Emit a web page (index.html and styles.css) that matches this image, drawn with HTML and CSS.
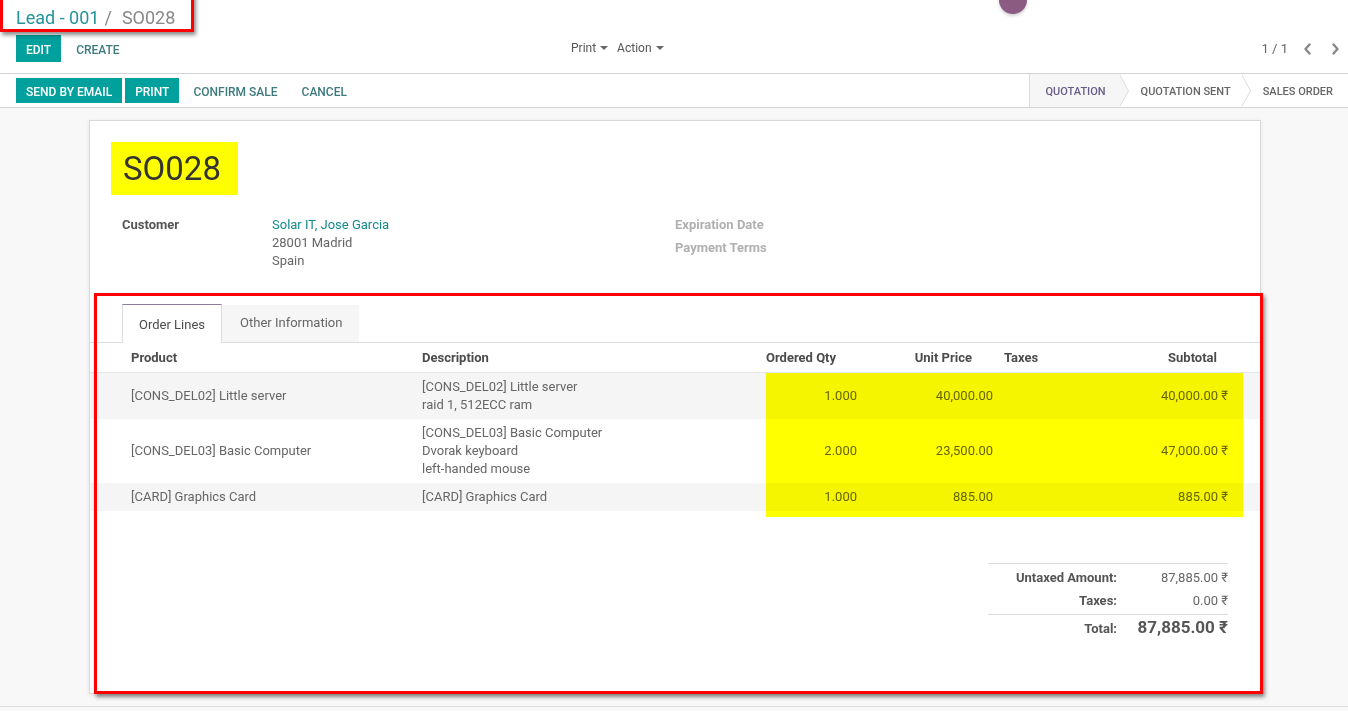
FILE: index.html
```html
<!DOCTYPE html>
<html>
<head>
<meta charset="utf-8">
<title>SO028</title>
<link rel="stylesheet" href="styles.css">
</head>
<body>
<header class="cp">
  <div class="cp-top">
    <div class="breadcrumb">
      <a class="bc-link">Lead - 001</a><span class="bc-sep">/</span><span class="bc-cur">SO028</span>
    </div>
  </div>
  <div class="cp-bottom">
    <div class="cp-buttons">
      <button class="btn btn-primary">Edit</button>
      <button class="btn btn-link">Create</button>
    </div>
    <div class="cp-sidebar">
      <span class="dd">Print <i class="caret"></i></span>
      <span class="dd">Action <i class="caret"></i></span>
    </div>
    <div class="cp-pager">
      <span class="pager-val">1 / 1</span>
      <span class="pager-btn"><svg width="9" height="12" viewBox="0 0 9 12"><path d="M6.5 1.5 L2.5 6 L6.5 10.5" fill="none" stroke="#888" stroke-width="2.4" stroke-linecap="round" stroke-linejoin="round"/></svg></span>
      <span class="pager-btn"><svg width="9" height="12" viewBox="0 0 9 12"><path d="M2.5 1.5 L6.5 6 L2.5 10.5" fill="none" stroke="#888" stroke-width="2.4" stroke-linecap="round" stroke-linejoin="round"/></svg></span>
    </div>
  </div>
  <div class="avatar"></div>
</header>

<div class="statusbar">
  <div class="sb-buttons">
    <button class="btn btn-primary btn-sb">Send by Email</button>
    <button class="btn btn-primary btn-sb">Print</button>
    <button class="btn btn-link btn-sb">Confirm Sale</button>
    <button class="btn btn-link btn-sb">Cancel</button>
  </div>
  <div class="stages">
    <div class="stage current">Quotation</div>
    <div class="stage">Quotation Sent</div>
    <div class="stage">Sales Order</div>
  </div>
</div>

<main class="content">
  <div class="sheet">
    <div class="title-wrap"><h1 class="title">SO028</h1></div>
    <div class="groups">
      <div class="group group-left">
        <div class="label">Customer</div>
        <div class="value">
          <a class="link">Solar IT, Jose Garcia</a><br>
          28001 Madrid<br>
          Spain
        </div>
      </div>
      <div class="group group-right">
        <div class="label muted">Expiration Date</div>
        <div class="label muted">Payment Terms</div>
      </div>
    </div>

    <div class="notebook">
      <div class="tabs">
        <div class="tab active">Order Lines</div>
        <div class="tab">Other Information</div>
      </div>
      <div class="lines">
        <table class="order-table">
          <colgroup>
            <col class="c-prod"><col class="c-desc"><col class="c-qty"><col class="c-price"><col class="c-tax"><col class="c-sub"><col class="c-trash">
          </colgroup>
          <thead>
            <tr>
              <th class="first">Product</th>
              <th>Description</th>
              <th class="num-h">Ordered Qty</th>
              <th class="num-h">Unit Price</th>
              <th class="tax-h">Taxes</th>
              <th class="num-h sub-h">Subtotal</th>
              <th></th>
            </tr>
          </thead>
          <tbody>
            <tr>
              <td class="first">[CONS_DEL02] Little server</td>
              <td>[CONS_DEL02] Little server<br>raid 1, 512ECC ram</td>
              <td class="num">1.000</td>
              <td class="num">40,000.00</td>
              <td></td>
              <td class="num">40,000.00 ₹</td>
              <td></td>
            </tr>
            <tr>
              <td class="first">[CONS_DEL03] Basic Computer</td>
              <td>[CONS_DEL03] Basic Computer<br>Dvorak keyboard<br>left-handed mouse</td>
              <td class="num">2.000</td>
              <td class="num">23,500.00</td>
              <td></td>
              <td class="num">47,000.00 ₹</td>
              <td></td>
            </tr>
            <tr>
              <td class="first">[CARD] Graphics Card</td>
              <td>[CARD] Graphics Card</td>
              <td class="num">1.000</td>
              <td class="num">885.00</td>
              <td></td>
              <td class="num">885.00 ₹</td>
              <td></td>
            </tr>
          </tbody>
        </table>
        <div class="highlight"></div>
      </div>

      <table class="totals">
        <tr class="t-row t-first">
          <td class="t-label">Untaxed Amount:</td>
          <td class="t-val">87,885.00 ₹</td>
        </tr>
        <tr class="t-row t-second">
          <td class="t-label">Taxes:</td>
          <td class="t-val">0.00 ₹</td>
        </tr>
        <tr class="t-row t-total">
          <td class="t-label">Total:</td>
          <td class="t-val t-big">87,885.00 ₹</td>
        </tr>
      </table>
    </div>
  </div>
</main>

<div class="annot annot-bc"></div>
<div class="annot annot-lines"></div>
</body>
</html>
```

FILE: styles.css
```css
* { box-sizing: border-box; }

html, body {
  margin: 0;
  padding: 0;
}

body {
  font-family: Roboto, "Noto Sans", "DejaVu Sans", sans-serif;
  font-size: 13px;
  color: #666;
  background: #f8f8f8;
  position: relative;
  overflow: hidden;
  height: 711px;
}

/* ---------- control panel ---------- */
.cp {
  position: relative;
  background: #fff;
  height: 74px;
  border-bottom: 1px solid #d4d4d4;
  padding: 0 16px;
}

.cp-top {
  height: 35px;
  display: flex;
  align-items: center;
}

.breadcrumb {
  font-size: 18px;
  line-height: 24px;
}

.bc-link { color: #23959a; }
.bc-sep { color: #888; padding: 0 10px 0 5px; }
.bc-cur { color: #888; }

.cp-bottom {
  display: flex;
  align-items: center;
  height: 27px;
}

.cp-buttons {
  flex: 0 0 555px;
  display: flex;
  align-items: center;
  gap: 5px;
}

.btn {
  display: inline-flex;
  align-items: center;
  font-family: Roboto, "Noto Sans", sans-serif;
  font-size: 12px;
  font-weight: 500;
  text-transform: uppercase;
  border: 0;
  border-radius: 0;
  height: 27px;
  padding: 3px 10px 0;
  line-height: 18px;
  cursor: pointer;
  background: transparent;
}

.btn-primary {
  background: #00a09d;
  color: #fff;
}

.btn-link {
  color: #3d7a7e;
}

.cp-sidebar {
  flex: 1;
  display: flex;
  align-items: center;
  gap: 9px;
  font-size: 12px;
  color: #555;
  margin-top: -2px;
}

.dd { display: inline-flex; align-items: center; }

.caret {
  display: inline-block;
  width: 0;
  height: 0;
  margin-left: 4px;
  border-left: 4px solid transparent;
  border-right: 4px solid transparent;
  border-top: 4px solid #666;
}

.cp-pager {
  display: flex;
  align-items: center;
  color: #666;
  font-size: 13px;
  margin-right: -17px;
}

.pager-val { margin-right: 5px; }

.pager-btn {
  width: 28px;
  height: 20px;
  display: inline-flex;
  align-items: center;
  justify-content: center;
}

.avatar {
  position: absolute;
  left: 999px;
  top: -14px;
  width: 28px;
  height: 28px;
  border-radius: 50%;
  background: #8c5b82;
  box-shadow: 0 2px 3px rgba(0, 0, 0, 0.18);
}

/* ---------- status bar ---------- */
.statusbar {
  display: flex;
  justify-content: space-between;
  height: 34px;
  background: #fff;
  border-bottom: 1px solid #d4d4d4;
  padding-left: 16px;
}

.sb-buttons {
  display: flex;
  align-items: center;
  gap: 3px;
}

.btn-sb {
  height: 25px;
  padding: 3px 10px 0;
}

.btn-link.btn-sb { margin-left: 1px; }

.stages {
  display: flex;
  align-items: stretch;
}

.stage {
  position: relative;
  display: flex;
  align-items: center;
  font-size: 11px;
  font-weight: 500;
  text-transform: uppercase;
  color: #666;
  padding: 1px 11px 0 21px;
  background: #fff;
}

.stage.current {
  background: #f6f6f6;
  color: #6a5c88;
  border-left: 1px solid #dcdcdc;
  padding-left: 15px;
  padding-right: 14px;
}

.stage:last-child { padding-right: 15px; }

.stage:not(:last-child)::before,
.stage:not(:last-child)::after {
  content: "";
  position: absolute;
  top: 0;
  width: 0;
  height: 0;
  border-top: 17px solid transparent;
  border-bottom: 16px solid transparent;
  z-index: 2;
}

.stage:not(:last-child)::before {
  right: -9px;
  border-left: 9px solid #dcdcdc;
}

.stage:not(:last-child)::after {
  right: -8px;
  border-left: 9px solid #fff;
}

.stage.current::after { border-left-color: #f6f6f6; }

/* ---------- content / sheet ---------- */
.content {
  padding: 12px 0;
  border-bottom: 1px solid #e0e0e0;
}

.sheet {
  width: 1172px;
  min-height: 574px;
  margin: 0 0 0 89px;
  background: #fff;
  border: 1px solid #d8d8d8;
  box-shadow: 0 1px 4px rgba(0, 0, 0, 0.08);
  padding-top: 21px;
}

.title-wrap { padding-left: 21px; }

.title {
  display: inline-block;
  margin: 0;
  height: 53px;
  line-height: 53px;
  padding: 0 17px 0 12px;
  background: #ffff00;
  font-size: 33px;
  font-weight: 400;
  color: #333;
}

.groups {
  display: grid;
  grid-template-columns: 553px 1fr;
  padding-left: 32px;
  margin-top: 21px;
  line-height: 18px;
}

.group-left {
  display: grid;
  grid-template-columns: 150px 1fr;
}

.label {
  font-weight: 700;
  color: #555;
}

.label.muted {
  color: #b0b0b0;
  margin-bottom: 5px;
}

.link { color: #16898b; }

.value { color: #666; }

/* ---------- notebook ---------- */
.notebook { margin-top: 34px; }

.tabs {
  display: flex;
  align-items: flex-start;
  padding-left: 32px;
  border-bottom: 1px solid #dcdcdc;
  height: 39px;
}

.tab {
  line-height: 18px;
  color: #666;
}

.tab.active {
  background: #fff;
  color: #4c4c4c;
  border: 1px solid #dcdcdc;
  border-top-color: #8e7a9c;
  border-bottom: 0;
  padding: 11px 16px 9px;
  height: 39px;
}

.tab:not(.active) {
  background: #f6f6f6;
  margin-top: 1px;
  height: 37px;
  padding: 9px 17px 10px 18px;
}

.lines { position: relative; }

.order-table {
  width: 100%;
  border-collapse: collapse;
  table-layout: fixed;
}

.c-prod { width: 324px; }
.c-desc { width: 344px; }
.c-qty { width: 107px; }
.c-price { width: 136px; }
.c-tax { width: 135px; }
.c-sub { width: 100px; }
.c-trash { width: 24px; }

.order-table th {
  text-align: left;
  font-weight: 700;
  color: #4c4c4c;
  line-height: 18px;
  padding: 6px 8px 5px;
  border-bottom: 1px solid #e4e6ea;
  white-space: nowrap;
}

.order-table th.num-h { text-align: right; padding-right: 29px; }
.order-table th.sub-h { padding-right: 19px; }
.order-table th.tax-h { padding-left: 3px; }

.order-table td {
  line-height: 18px;
  padding: 5px 8px;
  color: #666;
  vertical-align: middle;
  white-space: nowrap;
}

.order-table .first { padding-left: 41px; }

.order-table td.num { text-align: right; }

.order-table tbody tr:nth-child(odd) { background: #f5f5f5; }

.highlight {
  position: absolute;
  left: 676px;
  top: 30px;
  width: 477px;
  height: 144px;
  background: #ffff00;
  mix-blend-mode: multiply;
}

/* ---------- totals ---------- */
.totals {
  width: 240px;
  margin: 52px 32px 0 auto;
  border-collapse: collapse;
}

.totals td { padding: 0; line-height: 18px; }

.t-label {
  width: 129px;
  text-align: right;
  font-weight: 700;
  color: #555;
}

.t-val {
  text-align: right;
  color: #666;
}

.t-first td { border-top: 1px solid #dcdcdc; padding-top: 5px; }
.t-second td { padding-top: 5px; padding-bottom: 4px; }
.t-total td {
  border-top: 1px solid #dcdcdc;
  padding-top: 3px;
  vertical-align: baseline;
}

.t-big {
  font-size: 17px;
  font-weight: 700;
  color: #555;
  line-height: 24px;
}

/* ---------- annotation boxes ---------- */
.annot {
  position: absolute;
  border: 3px solid #ff0000;
  box-shadow: 2px 3px 4px rgba(0, 0, 0, 0.45);
  pointer-events: none;
}

.annot-bc {
  left: 0;
  top: -10px;
  width: 194px;
  height: 42px;
}

.annot-lines {
  left: 94px;
  top: 293px;
  width: 1169px;
  height: 401px;
}
```
